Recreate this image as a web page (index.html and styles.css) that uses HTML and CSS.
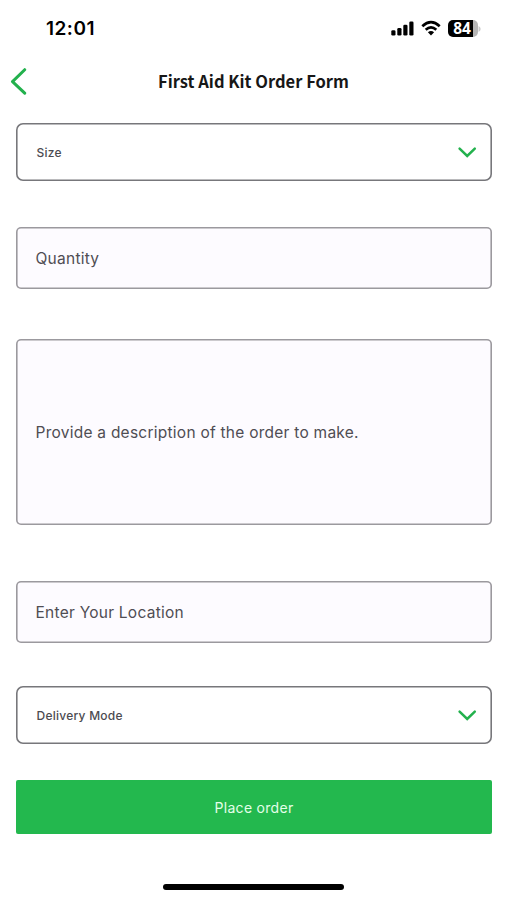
FILE: index.html
```html
<!DOCTYPE html>
<html lang="en">
<head>
<meta charset="utf-8">
<meta name="viewport" content="width=device-width, initial-scale=1">
<title>First Aid Kit Order Form</title>
<link rel="stylesheet" href="styles.css">
</head>
<body>
<div class="screen">
  <div class="status">
    <span class="time">12:01</span>
    <div class="indicators">
      <svg class="signal" width="24" height="16" viewBox="0 0 24 16"><rect x="0.3" y="10.3" width="4.2" height="5.2" rx="1.3"/><rect x="6.3" y="8" width="4.2" height="7.5" rx="1.3"/><rect x="12.3" y="4.8" width="4.2" height="10.7" rx="1.3"/><rect x="18.3" y="1.4" width="4.2" height="14.1" rx="1.3"/></svg>
      <svg class="wifi" width="20" height="16" viewBox="0 0 20 16"><path d="M1.3 6.2Q10 -1.8 18.7 6.2M4.7 9.8Q10 5 15.3 9.8" fill="none" stroke="#000" stroke-width="2.7"/><path d="M6.9 12.3Q10 9.6 13.1 12.3L10 15.5Z"/></svg>
      <div class="battery"><span class="level">84</span><svg class="cap" width="3" height="6" viewBox="0 0 3 6"><path d="M0.5 0Q2.7 1.2 2.7 3T0.5 6Z" fill="#ccc"/></svg></div>
    </div>
  </div>
  <header class="header">
    <svg class="back" width="18" height="28" viewBox="0 0 18 28"><path d="M14.7 2.7L2.5 14.6L14.7 26.2" fill="none" stroke="#23b14d" stroke-width="3" stroke-linecap="round" stroke-linejoin="round"/></svg>
    <h1 class="title">First Aid Kit Order Form</h1>
  </header>
  <main class="form">
    <div class="select"><span class="size">Size</span><svg class="chevron" width="20" height="12" viewBox="0 0 20 12"><path d="M2.6 2.6L10.2 9.9L17.8 2.6" fill="none" stroke="#23b14d" stroke-width="2.5" stroke-linecap="round"/></svg></div>
    <div class="field quantity"><span>Quantity</span></div>
    <div class="field description"><span>Provide a description of the order to make.</span></div>
    <div class="field location"><span>Enter Your Location</span></div>
    <div class="select delivery"><span>Delivery Mode</span><svg class="chevron" width="20" height="12" viewBox="0 0 20 12"><path d="M2.6 2.6L10.2 9.9L17.8 2.6" fill="none" stroke="#23b14d" stroke-width="2.5" stroke-linecap="round"/></svg></div>
    <button class="submit" type="button">Place order</button>
  </main>
  <div class="home"></div>
</div>
</body>
</html>
```
FILE: styles.css
```css
* { box-sizing: border-box; }
body { margin: 0; background: #fff; font-family: Inter, "Liberation Sans", sans-serif; }
.screen { width: 507px; height: 900px; overflow: hidden; background: #fff; }
svg { display: block; flex: none; }
.status { height: 57px; display: flex; justify-content: space-between; padding-left: 46px; padding-right: 26px; }
.time { font-size: 19px; line-height: 24px; font-weight: 600; letter-spacing: 0.5px; margin-top: 17px; }
.indicators { display: flex; align-items: flex-start; padding-top: 20px; }
.wifi { margin-left: 6px; }
.battery { display: flex; align-items: center; margin-left: 7px; }
.level { width: 30px; height: 17px; border-radius: 5px; background: linear-gradient(90deg, #000 0 25px, #b5b5b5 25px); color: #fff; font: 700 15.5px/17px "Open Sans", sans-serif; text-align: center; padding-right: 2px; }
.header { height: 66px; display: flex; padding: 0 10px; }
.back { margin-top: 10px; }
.title { flex: 1; margin: 12px 18px 0 0; font: 700 16.5px/24px "Noto Sans CJK SC", sans-serif; color: #171717; text-align: center; }
.form { padding: 0 15px 0 16px; display: flex; flex-direction: column; }
.select, .field { display: flex; align-items: center; }
.select { height: 58px; box-shadow: inset 0 0 0 1.6px #77777b; border-radius: 7px; padding: 0 15px 0 20.5px; justify-content: space-between; font-size: 12px; font-weight: 500; color: #4c4b51; letter-spacing: 0.25px; }
.field { box-shadow: inset 0 0 0 1.6px #9b999e; border-radius: 5px; background: #fdfbff; padding-left: 19.5px; font-size: 15.5px; color: #4f4d53; letter-spacing: 0.25px; }
.quantity { height: 62px; margin-top: 46px; }
.description { height: 186px; margin-top: 50px; padding-top: 1px; }
.location { height: 62px; margin-top: 56px; }
.delivery { margin-top: 43px; }
.submit { height: 54px; margin-top: 36px; border: 0; border-radius: 2px; background: #23b84e; color: #e4ffe9; font: 400 14px/20px Inter, sans-serif; letter-spacing: 0.3px; padding: 1px 0 0; }
.home { width: 181px; height: 6px; border-radius: 3px; margin: 50px auto 0; background: #000; }
```
